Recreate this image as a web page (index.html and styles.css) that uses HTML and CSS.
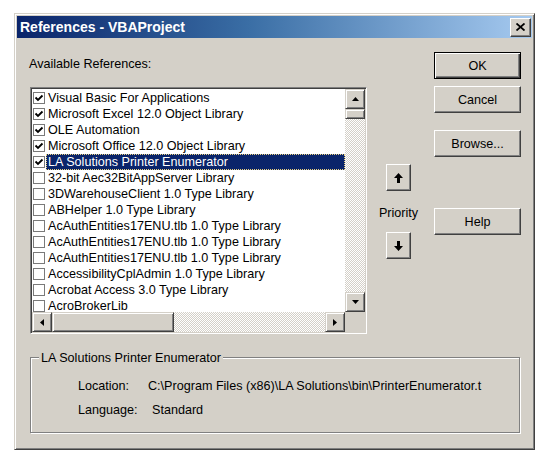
FILE: index.html
```html
<!DOCTYPE html>
<html>
<head>
<meta charset="utf-8">
<title>References - VBAProject</title>
<link rel="stylesheet" href="styles.css">
</head>
<body>
<div class="window">
  <div class="titlebar">
    <span class="title">References - VBAProject</span>
    <div class="close-btn">
      <svg width="9" height="8" viewBox="0 0 9 8"><path d="M0.5 0.5 L8.5 7.5 M8.5 0.5 L0.5 7.5" stroke="#000" stroke-width="1.8" fill="none"/></svg>
    </div>
  </div>
  <div class="content">
    <div class="top-row">
      <div class="left-col">
        <div class="label-available">Available References:</div>
        <div class="listbox">
          <div class="list-area">
            <div class="row"><span class="cb"><svg width="10" height="10" viewBox="0 0 10 10"><path d="M1.5 4.5 L4 7 L8.5 2.5" stroke="#000" stroke-width="1.8" fill="none"/></svg></span><span class="item">Visual Basic For Applications</span></div>
            <div class="row"><span class="cb"><svg width="10" height="10" viewBox="0 0 10 10"><path d="M1.5 4.5 L4 7 L8.5 2.5" stroke="#000" stroke-width="1.8" fill="none"/></svg></span><span class="item">Microsoft Excel 12.0 Object Library</span></div>
            <div class="row"><span class="cb"><svg width="10" height="10" viewBox="0 0 10 10"><path d="M1.5 4.5 L4 7 L8.5 2.5" stroke="#000" stroke-width="1.8" fill="none"/></svg></span><span class="item">OLE Automation</span></div>
            <div class="row"><span class="cb"><svg width="10" height="10" viewBox="0 0 10 10"><path d="M1.5 4.5 L4 7 L8.5 2.5" stroke="#000" stroke-width="1.8" fill="none"/></svg></span><span class="item">Microsoft Office 12.0 Object Library</span></div>
            <div class="row"><span class="cb"><svg width="10" height="10" viewBox="0 0 10 10"><path d="M1.5 4.5 L4 7 L8.5 2.5" stroke="#000" stroke-width="1.8" fill="none"/></svg></span><span class="item selected">LA Solutions Printer Enumerator</span></div>
            <div class="row"><span class="cb"></span><span class="item">32-bit Aec32BitAppServer Library</span></div>
            <div class="row"><span class="cb"></span><span class="item">3DWarehouseClient 1.0 Type Library</span></div>
            <div class="row"><span class="cb"></span><span class="item">ABHelper 1.0 Type Library</span></div>
            <div class="row"><span class="cb"></span><span class="item">AcAuthEntities17ENU.tlb 1.0 Type Library</span></div>
            <div class="row"><span class="cb"></span><span class="item">AcAuthEntities17ENU.tlb 1.0 Type Library</span></div>
            <div class="row"><span class="cb"></span><span class="item">AcAuthEntities17ENU.tlb 1.0 Type Library</span></div>
            <div class="row"><span class="cb"></span><span class="item">AccessibilityCplAdmin 1.0 Type Library</span></div>
            <div class="row"><span class="cb"></span><span class="item">Acrobat Access 3.0 Type Library</span></div>
            <div class="row"><span class="cb"></span><span class="item">AcroBrokerLib</span></div>
          </div>
          <div class="vscroll">
            <div class="sb-btn"><svg width="7" height="4" viewBox="0 0 7 4"><polygon points="3.5,0 7,4 0,4" fill="#000"/></svg></div>
            <div class="sb-thumb-v"></div>
            <div class="sb-track"></div>
            <div class="sb-btn"><svg width="7" height="4" viewBox="0 0 7 4"><polygon points="0,0 7,0 3.5,4" fill="#000"/></svg></div>
          </div>
          <div class="hscroll">
            <div class="sb-btn"><svg width="4" height="7" viewBox="0 0 4 7"><polygon points="4,0 4,7 0,3.5" fill="#000"/></svg></div>
            <div class="sb-thumb-h"></div>
            <div class="sb-track"></div>
            <div class="sb-btn"><svg width="4" height="7" viewBox="0 0 4 7"><polygon points="0,0 4,3.5 0,7" fill="#000"/></svg></div>
          </div>
          <div class="sb-corner"></div>
        </div>
      </div>
      <div class="mid-col">
        <div class="prio-btn"><svg width="9" height="10" viewBox="0 0 9 10"><polygon points="4.5,0 9,5 6,5 6,10 3,10 3,5 0,5" fill="#000"/></svg></div>
        <div class="prio-label">Priority</div>
        <div class="prio-btn"><svg width="9" height="10" viewBox="0 0 9 10"><polygon points="3,0 6,0 6,5 9,5 4.5,10 0,5 3,5" fill="#000"/></svg></div>
      </div>
      <div class="right-col">
        <div class="btn btn-default">OK</div>
        <div class="btn btn-cancel">Cancel</div>
        <div class="btn btn-browse">Browse...</div>
        <div class="btn btn-help">Help</div>
      </div>
    </div>
    <div class="group">
      <span class="group-title">LA Solutions Printer Enumerator</span>
      <div class="info-row"><span class="info-label loc">Location:</span><span class="info-value">C:\Program Files (x86)\LA Solutions\bin\PrinterEnumerator.t</span></div>
      <div class="info-row lang-row"><span class="info-label lang">Language:</span><span class="info-value">Standard</span></div>
    </div>
  </div>
</div>
</body>
</html>
```

FILE: styles.css
```css
html, body {
  margin: 0;
  padding: 0;
  background: #ffffff;
}

body {
  font-family: "Liberation Sans", Arial, sans-serif;
  font-size: 12.6px;
  color: #000;
}

.window {
  box-sizing: border-box;
  width: 521px;
  height: 437px;
  margin: 13px 0 0 14px;
  background: #d4d0c8;
  border: 1px solid;
  border-color: #d4d0c8 #404040 #404040 #d4d0c8;
  box-shadow: inset 1px 1px 0 #ffffff, inset -1px -1px 0 #808080;
  padding: 2px;
  display: flex;
  flex-direction: column;
}

.titlebar {
  height: 22px;
  background: linear-gradient(to right, #0a246a 0%, #3a6ea5 45%, #a6caf0 100%);
  display: flex;
  align-items: center;
  justify-content: space-between;
  padding-left: 3px;
  padding-right: 1px;
}

.title {
  color: #ffffff;
  font-weight: bold;
  font-size: 14px;
  white-space: nowrap;
}

.close-btn {
  box-sizing: border-box;
  width: 21px;
  height: 19px;
  background: #d4d0c8;
  border: 1px solid;
  border-color: #ffffff #404040 #404040 #ffffff;
  box-shadow: inset -1px -1px 0 #808080;
  display: flex;
  align-items: center;
  justify-content: center;
}

.content {
  padding: 14px 11px 0 12px;
  display: flex;
  flex-direction: column;
}

.top-row {
  display: flex;
}

.left-col {
  width: 338px;
  display: flex;
  flex-direction: column;
}

.label-available {
  margin-top: 4px;
  line-height: 16px;
  height: 16px;
}

.listbox {
  box-sizing: border-box;
  width: 337px;
  height: 247px;
  margin-top: 15px;
  margin-left: 1px;
  border: 1px solid;
  border-color: #808080 #ffffff #ffffff #808080;
  box-shadow: inset 1px 1px 0 #404040, inset -1px -1px 0 #d4d0c8;
  padding: 1px;
  display: grid;
  grid-template-columns: 313px 20px;
  grid-template-rows: 223px 20px;
}

.list-area {
  background: #ffffff;
  overflow: hidden;
  padding-top: 1px;
}

.row {
  display: flex;
  align-items: center;
  height: 16px;
}

.cb {
  box-sizing: border-box;
  width: 12px;
  height: 12px;
  margin-left: 1px;
  border: 1px solid #7a7a7a;
  background: #ffffff;
  display: flex;
  align-items: center;
  justify-content: center;
  flex: none;
}

.cb svg {
  display: block;
}

.item {
  box-sizing: border-box;
  flex: 1;
  height: 16px;
  line-height: 13px;
  margin-left: 1px;
  padding: 1px 0 0 1px;
  border: 1px solid transparent;
  white-space: nowrap;
  overflow: hidden;
}

.item.selected {
  background: #0a246a;
  color: #ffffff;
  border: 1px dotted #e8d080;
}

.vscroll {
  display: flex;
  flex-direction: column;
}

.hscroll {
  display: flex;
}

.sb-btn {
  box-sizing: border-box;
  width: 20px;
  height: 20px;
  flex: none;
  background: #d4d0c8;
  border: 1px solid;
  border-color: #d4d0c8 #404040 #404040 #d4d0c8;
  box-shadow: inset 1px 1px 0 #ffffff, inset -1px -1px 0 #808080;
  display: flex;
  align-items: center;
  justify-content: center;
}

.sb-btn svg {
  display: block;
}

.sb-track {
  flex: 1;
  background-image: repeating-conic-gradient(#d4d0c8 0 25%, #ffffff 0 50%);
  background-size: 2px 2px;
}

.sb-thumb-v {
  box-sizing: border-box;
  height: 10px;
  flex: none;
  background: #d4d0c8;
  border: 1px solid;
  border-color: #d4d0c8 #404040 #404040 #d4d0c8;
  box-shadow: inset 1px 1px 0 #ffffff, inset -1px -1px 0 #808080;
}

.sb-thumb-h {
  box-sizing: border-box;
  width: 122px;
  flex: none;
  background: #d4d0c8;
  border: 1px solid;
  border-color: #d4d0c8 #404040 #404040 #d4d0c8;
  box-shadow: inset 1px 1px 0 #ffffff, inset -1px -1px 0 #808080;
}

.sb-corner {
  background: #d4d0c8;
}

.mid-col {
  width: 67px;
  box-sizing: border-box;
  padding-top: 112px;
  padding-right: 4px;
  display: flex;
  flex-direction: column;
  align-items: center;
}

.prio-btn {
  box-sizing: border-box;
  width: 25px;
  height: 27px;
  background: #d4d0c8;
  border: 1px solid;
  border-color: #ffffff #404040 #404040 #ffffff;
  box-shadow: inset -1px -1px 0 #808080;
  display: flex;
  align-items: center;
  justify-content: center;
}

.prio-label {
  margin: 14px 0 11px;
  line-height: 16px;
  height: 16px;
}

.right-col {
  width: 87px;
  display: flex;
  flex-direction: column;
}

.btn {
  box-sizing: border-box;
  width: 87px;
  height: 27px;
  padding-top: 1px;
  background: #d4d0c8;
  border: 1px solid;
  border-color: #ffffff #404040 #404040 #ffffff;
  box-shadow: inset -1px -1px 0 #808080;
  display: flex;
  align-items: center;
  justify-content: center;
}

.btn-default {
  border: 1px solid #000000;
  box-shadow: inset 1px 1px 0 #ffffff, inset -1px -1px 0 #404040, inset -2px -2px 0 #808080;
}

.btn-cancel {
  margin-top: 7px;
}

.btn-browse {
  margin-top: 17px;
}

.btn-help {
  margin-top: 51px;
}

.group {
  position: relative;
  box-sizing: border-box;
  width: 490px;
  height: 76px;
  margin-top: 23px;
  margin-left: 1px;
  border: 1px solid #808080;
  box-shadow: inset 1px 1px 0 #ffffff, 1px 1px 0 #ffffff;
  padding: 20px 0 0 47px;
}

.group-title {
  position: absolute;
  top: -8px;
  left: 8px;
  padding: 0 2px;
  background: #d4d0c8;
  line-height: 16px;
  white-space: nowrap;
}

.info-row {
  display: flex;
  height: 16px;
  line-height: 16px;
  white-space: nowrap;
}

.lang-row {
  margin-top: 8px;
}

.info-label.loc {
  width: 70px;
}

.info-label.lang {
  width: 74px;
}
```
